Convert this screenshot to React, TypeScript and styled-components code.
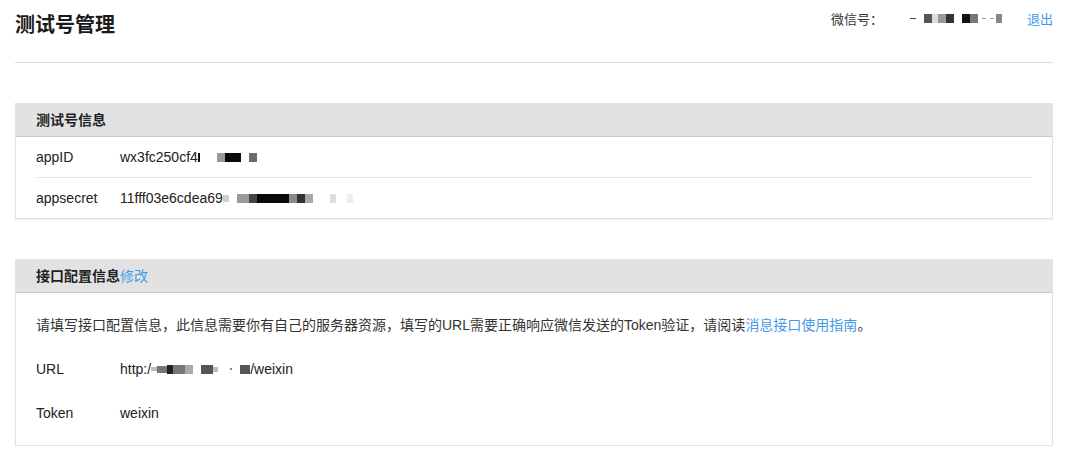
import styled, { createGlobalStyle } from "styled-components"

const GlobalStyle = createGlobalStyle`
    html, body {
        margin: 0;
        padding: 0;
        background: #ffffff;
    }
    body {
        font-family: "Helvetica Neue", "Liberation Sans", Arial, "Noto Sans CJK SC", sans-serif;
        font-size: 14px;
        color: #222;
    }
`

const Page = styled.div`
    width: 1038px;
    margin-left: 15px;
`

const TopBar = styled.div`
    display: flex;
    align-items: center;
    justify-content: space-between;
    height: 50px;
    border-bottom: 1px solid #dcdcdc;
    padding-bottom: 12px;
`

const Title = styled.h1`
    margin: 0;
    font-size: 20px;
    font-weight: bold;
    color: #1a1a1a;
    line-height: 50px;
    margin-top: -1px;
`

const Account = styled.div`
    display: flex;
    align-items: center;
    font-size: 13px;
    color: #333;
    margin-top: -13px;
`

const AccountLabel = styled.span`
    margin-right: 27px;
`

const Link = styled.a`
    color: #459ae9;
    text-decoration: none;
    cursor: pointer;
`

const Logout = styled(Link)`
    margin-left: 25px;
`

const Panel = styled.div`
    margin-top: 40px;
    border: 1px solid #e1e1e1;
    box-shadow: 0 1px 1px rgba(0, 0, 0, 0.06);
    background: #fff;
`

const PanelHead = styled.div`
    height: 32px;
    line-height: 32px;
    padding: 0 20px;
    background: #e2e2e2;
    border-bottom: 1px solid #c9c9c9;
    font-size: 14px;
    font-weight: bold;
    color: #222;

    a {
        font-weight: normal;
    }
`

const PanelBody = styled.div<{ $loose?: boolean }>`
    padding: ${p => (p.$loose ? "10px 20px" : "0 20px")};
`

const Row = styled.div<{ $tall?: boolean }>`
    display: flex;
    align-items: center;
    height: ${p => (p.$tall ? "44px" : "40px")};
    border-bottom: ${p => (p.$tall ? "none" : "1px solid #e6e6e6")};

    &:last-child {
        border-bottom: none;
    }
`

const Label = styled.span`
    width: 84px;
    flex-shrink: 0;
`

const Value = styled.span`
    display: flex;
    align-items: center;
`

const Note = styled.div`
    height: 44px;
    line-height: 44px;
    color: #333;
`

const Mask = styled.span<{ $w: number; $c: string; $h?: number; $gap?: number }>`
    display: inline-block;
    width: ${p => p.$w}px;
    height: ${p => p.$h ?? 9}px;
    background: ${p => p.$c};
    margin-left: ${p => p.$gap ?? 0}px;
`

type Block = [number, string, number?, number?]

function Blur({ blocks }: { blocks: Block[] }) {
    return (
        <>
            {blocks.map(([w, c, gap, h], i) => (
                <Mask key={i} $w={w} $c={c} $gap={gap} $h={h} />
            ))}
        </>
    )
}

const idMask: Block[] = [
    [2, "#111", 0],
    [8, "#9a9a9a", 17],
    [16, "#0a0a0a", 0],
    [8, "#6c6c6c", 8],
]

const secretMask: Block[] = [
    [6, "#d0d0d0", 0, 7],
    [12, "#9a9a9a", 8],
    [8, "#444", 0],
    [32, "#0a0a0a", 0],
    [8, "#8a8a8a", 0],
    [8, "#333", 0],
    [8, "#a8a8a8", 0],
    [6, "#dedede", 17],
    [6, "#eeeeee", 11],
]

const urlMask: Block[] = [
    [6, "#bbb", 0, 4],
    [10, "#777", 0, 7],
    [6, "#222", 0],
    [12, "#777", 0],
    [8, "#aaa", 0],
    [12, "#555", 8],
    [5, "#bbb", 0, 5],
    [2, "#888", 12, 2],
    [10, "#555", 8],
]

const wxMask: Block[] = [
    [6, "#444", 0, 1],
    [8, "#555", 8],
    [6, "#ddd", 0],
    [8, "#999", 0],
    [8, "#333", 0],
    [8, "#111", 8],
    [8, "#777", 0],
    [4, "#999", 4, 1],
    [4, "#999", 4, 1],
    [6, "#888", 2],
]

export default function App() {
    return (
        <Page>
            <GlobalStyle />
            <TopBar>
                <Title>测试号管理</Title>
                <Account>
                    <AccountLabel>微信号：</AccountLabel>
                    <Value>
                        <Blur blocks={wxMask} />
                    </Value>
                    <Logout>退出</Logout>
                </Account>
            </TopBar>

            <Panel>
                <PanelHead>测试号信息</PanelHead>
                <PanelBody>
                    <Row>
                        <Label>appID</Label>
                        <Value>
                            wx3fc250cf4
                            <Blur blocks={idMask} />
                        </Value>
                    </Row>
                    <Row>
                        <Label>appsecret</Label>
                        <Value>
                            11fff03e6cdea69
                            <Blur blocks={secretMask} />
                        </Value>
                    </Row>
                </PanelBody>
            </Panel>

            <Panel>
                <PanelHead>
                    接口配置信息<Link>修改</Link>
                </PanelHead>
                <PanelBody $loose>
                    <Note>
                        请填写接口配置信息，此信息需要你有自己的服务器资源，填写的URL需要正确响应微信发送的Token验证，请阅读
                        <Link>消息接口使用指南</Link>。
                    </Note>
                    <Row $tall>
                        <Label>URL</Label>
                        <Value>
                            http:/
                            <Blur blocks={urlMask} />
                            /weixin
                        </Value>
                    </Row>
                    <Row $tall>
                        <Label>Token</Label>
                        <Value>weixin</Value>
                    </Row>
                </PanelBody>
            </Panel>
        </Page>
    )
}
